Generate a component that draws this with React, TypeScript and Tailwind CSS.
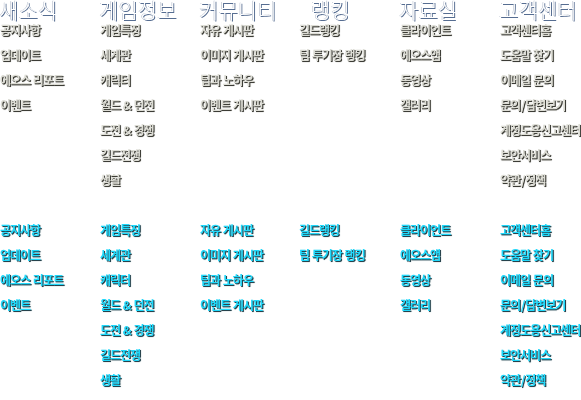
const columns = [
  { title: '새소식', indent: 'pl-0', shift: 'ml-0', items: ['공지사항', '업데이트', '에오스 리포트', '이벤트'] },
  { title: '게임정보', indent: 'pl-0', shift: 'ml-0', items: ['게임특징', '세계관', '캐릭터', '월드 & 던전', '도전 & 경쟁', '길드전쟁', '생활'] },
  { title: '커뮤니티', indent: 'pl-0', shift: 'ml-0', items: ['자유 게시판', '이미지 게시판', '팁과 노하우', '이벤트 게시판'] },
  { title: '랭킹', indent: 'pl-[12px]', shift: '-ml-px', items: ['길드랭킹', '팀 투기장 랭킹'] },
  { title: '자료실', indent: 'pl-0', shift: 'ml-0', items: ['클라이언트', '에오스앱', '동영상', '갤러리'] },
  { title: '고객센터', indent: 'pl-0', shift: 'ml-0', items: ['고객센터홈', '도움말 찾기', '이메일 문의', '문의/답변보기', '계정도용신고센터', '보안서비스', '약관/정책'] },
];

function Links({ items, className }: { items: string[]; className: string }) {
  return (
    <ul className={`h-[200px] text-[12px] font-bold leading-[25px] tracking-[-1px] [word-spacing:1px] ${className}`}>
      {items.map((item) => (
        <li key={item} className="h-[25px]">
          {item.split('/').map((part, i) => (
            <span key={part}>
              {i > 0 && <span className="mx-[0.75px]">/</span>}
              {part}
            </span>
          ))}
        </li>
      ))}
    </ul>
  );
}

export default function App() {
  return (
    <div className="h-[400px] w-[581px] overflow-hidden bg-white">
      <nav className="-ml-px -mt-[6px] grid w-[601px] grid-cols-[repeat(6,100px)] whitespace-nowrap pl-px font-['Noto_Sans_CJK_KR',sans-serif] opacity-[0.999] will-change-[opacity]">
        {columns.map(({ title, indent, shift, items }) => (
          <section key={title}>
            <h2 className={`-ml-px h-[23px] text-[21px] font-light leading-[30px] tracking-[0.1px] text-white [text-shadow:1px_1px_0_#566d91,-0.5px_-0.5px_0_#a9b3c4] ${indent}`}>
              {title}
            </h2>
            <div className={shift}>
              <Links items={items} className="text-[#dcdcd4] [text-shadow:1px_1px_0_#3c3c36,1px_1px_1px_#77776f]" />
              <Links items={items} className="text-[#20d9fb] [text-shadow:1px_1px_0_#26424c,1px_1px_1px_#54777f]" />
            </div>
          </section>
        ))}
      </nav>
    </div>
  );
}
